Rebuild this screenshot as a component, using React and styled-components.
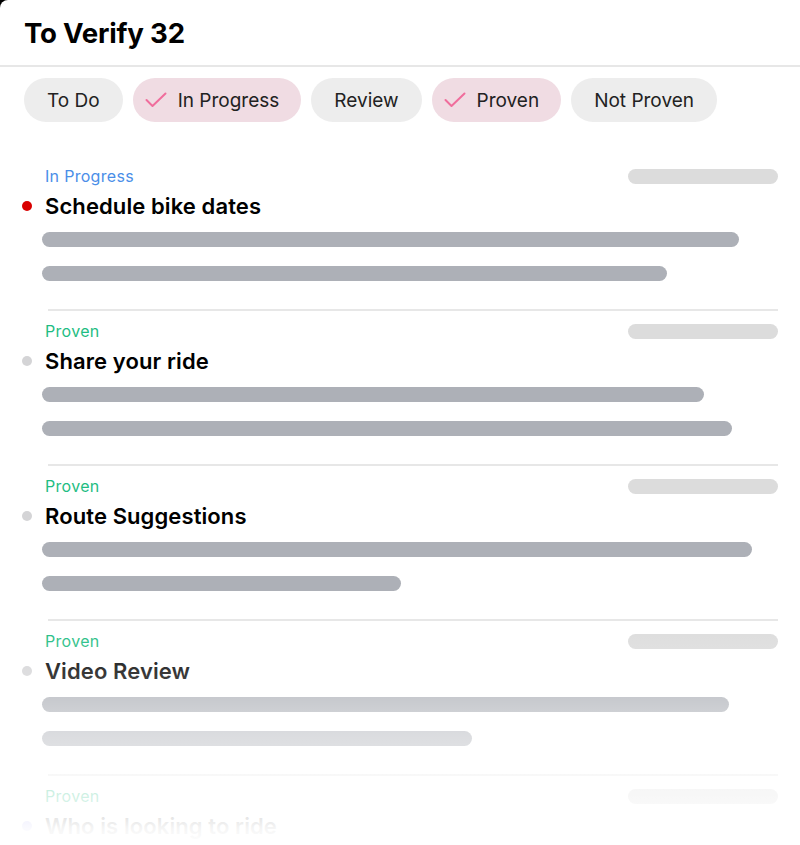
import styled, { createGlobalStyle } from "styled-components";

const GlobalStyle = createGlobalStyle`
	html, body {
		margin: 0;
		background: #000;
	}
	body {
		font-family: Inter, "Noto Sans", "Liberation Sans", sans-serif;
		-webkit-font-smoothing: antialiased;
	}
`;

const filters = [
	{ label: "To Do" },
	{ label: "In Progress", active: true },
	{ label: "Review" },
	{ label: "Proven", active: true },
	{ label: "Not Proven" },
];

const tasks = [
	{ status: "In Progress", tone: "blue", title: "Schedule bike dates", dot: "#d90000", bars: [697, 625] },
	{ status: "Proven", tone: "green", title: "Share your ride", dot: "#d4d4d6", bars: [662, 690] },
	{ status: "Proven", tone: "green", title: "Route Suggestions", dot: "#d4d4d6", bars: [710, 359] },
	{ status: "Proven", tone: "green", title: "Video Review", dot: "#d4d4d6", bars: [687, 430] },
	{ status: "Proven", tone: "green", title: "Who is looking to ride", dot: "#7c7cf0", bars: [640, 500] },
];

const toneColors = {
	blue: "#4a8ee8",
	green: "#1fbd83",
};

export default function App() {
	return (
		<>
			<GlobalStyle />
			<Card>
				<Header>
					<Title>To Verify 32</Title>
				</Header>
				<Chips>
					{filters.map(f => (
						<Chip key={f.label} active={f.active}>
							{f.active && (
								<svg width="22" height="16" viewBox="0 0 22 16" fill="none">
									<polyline points="1.5,8 7.5,14 20.5,1.5" stroke="#f06d9c" strokeWidth="2" strokeLinecap="round" strokeLinejoin="round" />
								</svg>
							)}
							{f.label}
						</Chip>
					))}
				</Chips>
				<List>
					{tasks.map((t, i) => (
						<Item key={i}>
							<StatusRow>
								<Status tone={t.tone}>{t.status}</Status>
								<Skeleton />
							</StatusRow>
							<TitleRow>
								<Dot color={t.dot} />
								<TaskTitle>{t.title}</TaskTitle>
							</TitleRow>
							<Bars>
								{t.bars.map((w, j) => (
									<Bar key={j} style={{ width: w }} />
								))}
							</Bars>
							<Divider />
						</Item>
					))}
				</List>
				<Fade />
			</Card>
		</>
	);
}

const Card = styled.div`
	position: relative;
	width: 800px;
	height: 845px;
	overflow: hidden;
	background: #fff;
	border-top-left-radius: 8px;
`;

const Header = styled.div`
	height: 65px;
	display: flex;
	align-items: center;
	padding: 0 24px;
	border-bottom: 2px solid #e7e7e7;
`;

const Title = styled.h1`
	margin: 0;
	font-size: 27.6px;
	font-weight: 700;
	color: #000;
	letter-spacing: -0.2px;
`;

const Chips = styled.div`
	display: flex;
	gap: 10px;
	padding: 11px 24px 0;
`;

const Chip = styled.div`
	height: 44px;
	display: flex;
	align-items: center;
	gap: 11px;
	padding: ${p => (p.active ? "0 22px 0 12px" : "0 23px")};
	border-radius: 22px;
	background: ${p => (p.active ? "#f0dce3" : "#ededed")};
	font-size: 19px;
	color: #222;
`;

const List = styled.div`
	padding-top: 44px;
`;

const Item = styled.div`
	padding: 0 22px 0 22px;
`;

const StatusRow = styled.div`
	display: flex;
	align-items: center;
	justify-content: space-between;
	height: 20px;
	padding-left: 23px;
`;

const Status = styled.span`
	font-size: 16px;
	letter-spacing: 0.3px;
	color: ${p => toneColors[p.tone]};
`;

const Skeleton = styled.div`
	width: 150px;
	height: 15px;
	border-radius: 8px;
	background: #dcdcdc;
`;

const TitleRow = styled.div`
	display: flex;
	align-items: center;
	gap: 13px;
	height: 28px;
	margin-top: 6px;
`;

const Dot = styled.span`
	width: 10px;
	height: 10px;
	border-radius: 50%;
	background: ${p => p.color};
	flex-shrink: 0;
`;

const TaskTitle = styled.span`
	font-size: 22px;
	font-weight: 600;
	letter-spacing: 0.1px;
	color: #000;
`;

const Bars = styled.div`
	display: flex;
	flex-direction: column;
	gap: 19px;
	margin-top: 12px;
	padding-left: 20px;
`;

const Bar = styled.div`
	height: 15px;
	border-radius: 8px;
	background: #adb0b7;
`;

const Divider = styled.div`
	height: 2px;
	margin: 28px 0 10px 26px;
	background: #e7e7e7;
`;

const Fade = styled.div`
	position: absolute;
	inset: 0;
	pointer-events: none;
	background: linear-gradient(
		to bottom,
		rgba(255, 255, 255, 0) 0px,
		rgba(255, 255, 255, 0) 620px,
		rgba(255, 255, 255, 0.33) 700px,
		rgba(255, 255, 255, 0.56) 735px,
		rgba(255, 255, 255, 0.8) 800px,
		rgba(255, 255, 255, 0.96) 828px,
		rgba(255, 255, 255, 1) 845px
	);
`;
